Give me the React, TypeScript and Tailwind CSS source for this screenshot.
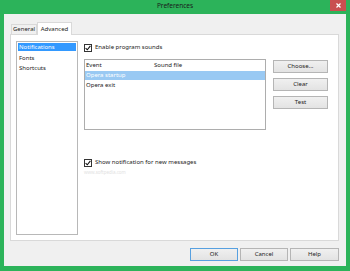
import React from "react";

const font = { fontFamily: '"Noto Sans", "Segoe UI", sans-serif' };

function Check() {
  return (
    <div className="w-[8px] h-[8px] border border-[#333] bg-white flex items-center justify-center shrink-0">
      <svg width="6" height="6" viewBox="0 0 6 6">
        <path d="M0.6 3.1 L2.3 4.8 L5.4 0.9" fill="none" stroke="#111" strokeWidth="1.1" />
      </svg>
    </div>
  );
}

function Btn({ label, def, w }: { label: string; def?: boolean; w: string }) {
  return (
    <div
      className={`${w} h-[13px] flex items-center justify-center text-[6px] text-[#222] bg-gradient-to-b from-[#f0f0f0] to-[#e3e3e3] border ${
        def ? "border-[#57a0e0]" : "border-[#b5b5b5]"
      }`}
    >
      {label}
    </div>
  );
}

export default function App() {
  return (
    <div
      className="w-[350px] h-[271px] bg-[#2cb35a] flex flex-col px-[4px] pb-[5px] text-black"
      style={font}
    >
      <div className="h-[14px] relative flex items-center justify-center shrink-0">
        <span className="text-[6.5px] text-[#1a1a1a] leading-none -mt-[1px]">Preferences</span>
        <div className="absolute right-0 top-0 w-[16px] h-[11px] bg-[#c94f50] flex items-center justify-center">
          <svg width="5" height="5" viewBox="0 0 5 5">
            <path d="M0.5 0.5 L4.5 4.5 M4.5 0.5 L0.5 4.5" stroke="#fff" strokeWidth="1.2" />
          </svg>
        </div>
      </div>
      <div className="flex-1 bg-[#f0f0f0] flex flex-col">
        <div className="flex items-end h-[20px] pl-[7px] shrink-0">
          <div className="h-[10px] px-[1px] w-[26px] border border-b-0 border-[#d9d9d9] bg-[#f0f0f0] flex items-center justify-center text-[6px] text-[#222] mb-0">
            General
          </div>
          <div className="h-[13px] w-[35px] border border-b-0 border-[#d9d9d9] bg-white flex items-center justify-center text-[6px] text-[#222] -mb-[1px] relative z-10">
            Advanced
          </div>
        </div>
        <div className="ml-[6px] w-[329px] h-[207px] bg-white border border-[#d9d9d9] flex pt-[6px] pl-[5px]">
          <div className="w-[62px] h-[194px] border border-[#b8b8b8] p-[1px] flex flex-col text-[6px] text-[#222] shrink-0">
            <div className="h-[8px] bg-[#3399ff] text-white flex items-center pl-[1px]">Notifications</div>
            <div className="h-[10px] flex items-center pl-[1px] mt-[2px]">Fonts</div>
            <div className="h-[10px] flex items-center pl-[1px]">Shortcuts</div>
          </div>
          <div className="flex flex-col ml-[6px]">
            <div className="flex items-center gap-[3px] mt-[2px] h-[9px] text-[6px] text-[#222]">
              <Check />
              <span>Enable program sounds</span>
            </div>
            <div className="flex mt-[7px]">
              <div className="w-[182px] h-[71px] border border-[#adadad] flex flex-col text-[6px] text-[#222]">
                <div className="h-[11px] flex items-center">
                  <span className="w-[69px] pl-[1px]">Event</span>
                  <span>Sound file</span>
                </div>
                <div className="h-[9px] bg-[#99c9f3] text-white flex items-center pl-[1px]">Opera startup</div>
                <div className="h-[10px] flex items-center pl-[1px]">Opera exit</div>
              </div>
              <div className="flex flex-col gap-[5px] ml-[7px] mt-[1px]">
                <Btn label="Choose..." w="w-[55px]" />
                <Btn label="Clear" w="w-[55px]" />
                <Btn label="Test" w="w-[55px]" />
              </div>
            </div>
            <div className="flex items-center gap-[3px] mt-[28px] h-[9px] text-[6px] text-[#222]">
              <Check />
              <span>Show notification for new messages</span>
            </div>
            <div className="text-[4.5px] text-[#e2e2e2] mt-[2px]">www.softpedia.com</div>
          </div>
        </div>
        <div className="flex justify-end gap-[2px] w-[335px] mt-[7px]">
          <Btn label="OK" def w="w-[48px]" />
          <Btn label="Cancel" w="w-[48px]" />
          <Btn label="Help" w="w-[49px]" />
        </div>
      </div>
    </div>
  );
}
